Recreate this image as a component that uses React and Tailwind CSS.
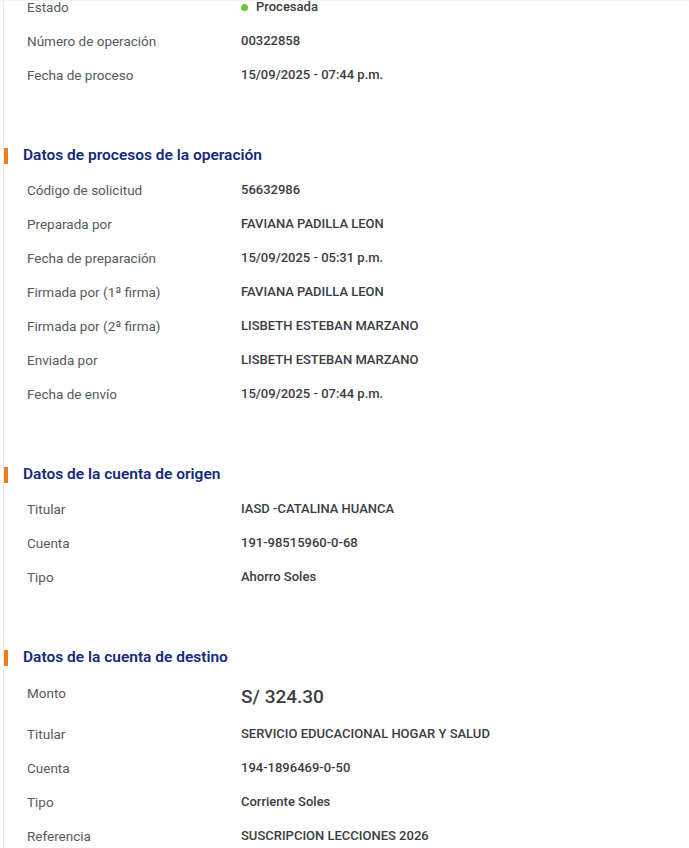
import React from "react";

const font = { fontFamily: "Roboto, 'Noto Sans', Arial, sans-serif" };

function Row({ label, children }) {
  return (
    <div className="flex h-[34px] items-center">
      <div className="w-[237px] shrink-0 pl-[23px] text-[13.5px] text-[#555a60]">{label}</div>
      <div className="text-[13px] font-medium text-[#3a3d41]">{children}</div>
    </div>
  );
}

function Header({ children }) {
  return (
    <div className="mt-[52px] mb-[5px] flex h-[24px] items-center">
      <div className="h-[16px] w-[4px] bg-[#f07c1a]" />
      <div className="pl-[15px] text-[15.5px] font-semibold text-[#152a7a]">{children}</div>
    </div>
  );
}

export default function App() {
  return (
    <div style={font} className="min-h-[848px] w-[689px] overflow-hidden bg-white pl-[3px] shadow-[inset_0_2px_2px_-1px_rgba(0,0,0,0.06)]">
      <div className="min-h-[848px] border-l border-[#ececec] pr-[3px]">
        <div className="-mt-[10px]">
          <Row label="Estado">
            <span className="flex items-center gap-[8px]">
              <span className="h-[7px] w-[7px] rounded-full bg-[#6cc62e]" />
              <span>Procesada</span>
            </span>
          </Row>
          <Row label="Número de operación">00322858</Row>
          <Row label="Fecha de proceso">15/09/2025 - 07:44 p.m.</Row>
        </div>

        <Header>Datos de procesos de la operación</Header>
        <Row label="Código de solicitud">56632986</Row>
        <Row label="Preparada por">FAVIANA PADILLA LEON</Row>
        <Row label="Fecha de preparación">15/09/2025 - 05:31 p.m.</Row>
        <Row label="Firmada por (1ª firma)">FAVIANA PADILLA LEON</Row>
        <Row label="Firmada por (2ª firma)">LISBETH ESTEBAN MARZANO</Row>
        <Row label="Enviada por">LISBETH ESTEBAN MARZANO</Row>
        <Row label="Fecha de envío">15/09/2025 - 07:44 p.m.</Row>

        <Header>Datos de la cuenta de origen</Header>
        <Row label="Titular">IASD -CATALINA HUANCA</Row>
        <Row label="Cuenta">191-98515960-0-68</Row>
        <Row label="Tipo">Ahorro Soles</Row>

        <Header>Datos de la cuenta de destino</Header>
        <div className="flex h-[42px] items-start">
          <div className="w-[237px] shrink-0 pl-[23px] pt-[10px] text-[13.5px] leading-[16px] text-[#555a60]">Monto</div>
          <div className="pt-[8px] text-[19px] font-medium leading-[28px] text-[#3a3d41]">S/ 324.30</div>
        </div>
        <Row label="Titular">SERVICIO EDUCACIONAL HOGAR Y SALUD</Row>
        <Row label="Cuenta">194-1896469-0-50</Row>
        <Row label="Tipo">Corriente Soles</Row>
        <Row label="Referencia">SUSCRIPCION LECCIONES 2026</Row>
      </div>
    </div>
  );
}
